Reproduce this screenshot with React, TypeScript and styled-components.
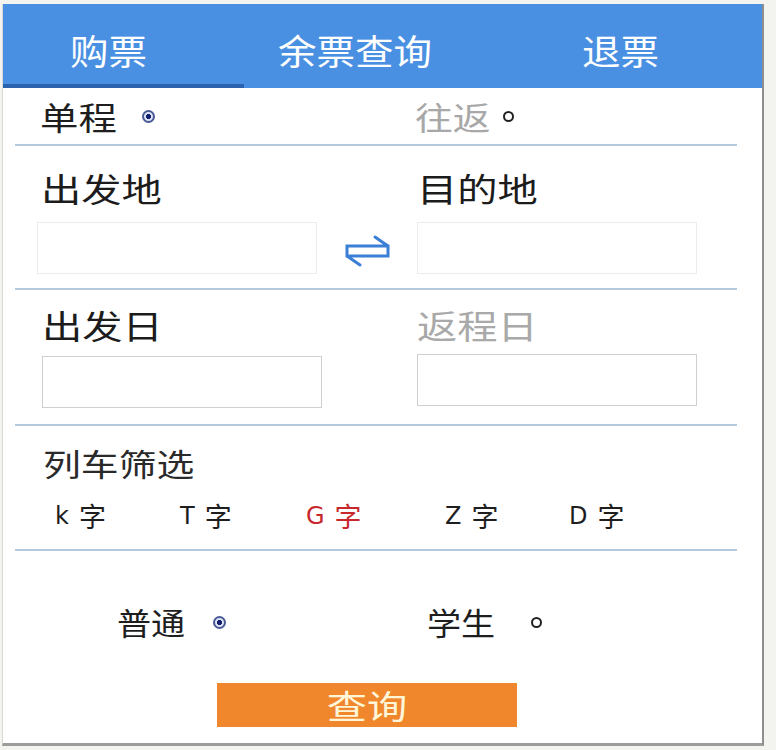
import React from "react";
import styled, { createGlobalStyle } from "styled-components";

const Global = createGlobalStyle`
  html, body { margin: 0; padding: 0; }
  body {
    background: #f3f3ef;
    font-family: "Noto Sans CJK SC", "Noto Sans", sans-serif;
    width: 776px;
    height: 750px;
    overflow: hidden;
  }
`;

const Stretch = styled.span<{ $sx: number; $origin?: string }>`
  display: inline-block;
  white-space: nowrap;
  transform: scaleX(${(p) => p.$sx});
  transform-origin: ${(p) => p.$origin ?? "left"} center;
`;

const Panel = styled.div`
  box-sizing: border-box;
  margin: 4px 0 0 2px;
  width: 762px;
  height: 742px;
  background: #fff;
  border-left: 1px solid #d8d8d8;
  border-right: 2px solid #8e8e8e;
  border-bottom: 3px solid #9c9c9c;
  display: flex;
  flex-direction: column;
`;

const TabBar = styled.div`
  display: flex;
  height: 84px;
  background: #4a90e2;
  flex-shrink: 0;
`;

const Tab = styled.div<{ $w: number; $pad: number; $active?: boolean }>`
  box-sizing: border-box;
  width: ${(p) => p.$w}px;
  padding-left: ${(p) => p.$pad}px;
  padding-top: 10px;
  display: flex;
  align-items: center;
  border-bottom: 4px solid ${(p) => (p.$active ? "#2a62ae" : "transparent")};
  color: #fff;
  font-size: 35px;
`;

const TripRow = styled.div`
  height: 56px;
  display: grid;
  grid-template-columns: 375px 1fr;
  align-items: center;
  padding-left: 37px;
`;

const Choice = styled.div<{ $muted?: boolean; $gap: number; $size?: number }>`
  display: flex;
  align-items: center;
  gap: ${(p) => p.$gap}px;
  font-size: ${(p) => p.$size ?? 32}px;
  line-height: 40px;
  color: ${(p) => (p.$muted ? "#a8a8a8" : "#1e1e1e")};
`;

const Radio = styled.span<{ $on?: boolean }>`
  box-sizing: border-box;
  display: inline-block;
  flex-shrink: 0;
  width: ${(p) => (p.$on ? 13 : 11)}px;
  height: ${(p) => (p.$on ? 13 : 11)}px;
  border-radius: 50%;
  border: 2px solid ${(p) => (p.$on ? "#4a5a96" : "#222")};
  background: ${(p) =>
    p.$on ? "radial-gradient(circle, #14206e 0 38%, #dfe6f5 45%)" : "#fff"};
`;

const Divider = styled.div`
  height: 2px;
  margin: 0 25px 0 12px;
  background: #b3c9dd;
  flex-shrink: 0;
`;

const FieldSection = styled.div<{ $h: number; $left: number; $mid: number }>`
  box-sizing: border-box;
  height: ${(p) => p.$h}px;
  display: grid;
  grid-template-columns: 280px ${(p) => p.$mid}px 280px;
  padding-left: ${(p) => p.$left}px;
`;

const Field = styled.div<{ $top: number }>`
  display: flex;
  flex-direction: column;
  padding-top: ${(p) => p.$top}px;
`;

const Label = styled.div<{ $muted?: boolean; $indent?: number }>`
  font-size: 33px;
  line-height: 40px;
  height: 40px;
  padding-left: ${(p) => p.$indent ?? 0}px;
  color: ${(p) => (p.$muted ? "#a9a9a9" : "#1c1c1c")};
`;

const Box = styled.div<{ $mt: number; $border: string }>`
  box-sizing: border-box;
  margin-top: ${(p) => p.$mt}px;
  height: 52px;
  border: 1px solid ${(p) => p.$border};
  background: #fff;
`;

const SwapCell = styled.div`
  display: flex;
  align-items: flex-end;
  justify-content: flex-start;
  padding: 0 0 21px 27px;
`;

const FilterSection = styled.div`
  height: 123px;
  padding-left: 40px;
  display: flex;
  flex-direction: column;
`;

const FilterTitle = styled.div`
  margin-top: 18px;
  font-size: 31px;
  line-height: 38px;
  color: #2a2a2a;
`;

const FilterRow = styled.div`
  margin-top: 17px;
  display: grid;
  grid-template-columns: 125px 126px 139px 124px auto;
  padding-left: 12px;
`;

const FilterItem = styled.div<{ $red?: boolean }>`
  display: flex;
  align-items: center;
  gap: 10px;
  font-size: 27px;
  line-height: 34px;
  color: ${(p) => (p.$red ? "#c7282c" : "#1e1e1e")};
`;

const Letter = styled.span`
  font-family: "DejaVu Sans", "Noto Sans", sans-serif;
  font-size: 24px;
`;

const PassengerRow = styled.div`
  height: 132px;
  display: grid;
  grid-template-columns: 310px 1fr;
  align-items: center;
  padding: 10px 0 0 114px;
  box-sizing: border-box;
`;

const ButtonRow = styled.div`
  padding-left: 214px;
`;

const QueryButton = styled.button`
  width: 300px;
  height: 44px;
  border: none;
  padding: 0;
  background: #f0872d;
  color: #fff6d8;
  font-family: "Noto Sans CJK SC", sans-serif;
  font-size: 33px;
  line-height: 44px;
`;

const SwapIcon = () => (
  <svg width="48" height="32" viewBox="0 0 48 32" fill="none">
    <path
      d="M3 11 H44 V21 H3 Z M44 11 L31 2 M3 21 L16 30"
      stroke="#3b7fd6"
      strokeWidth="3"
      strokeLinejoin="miter"
      strokeLinecap="round"
    />
  </svg>
);

export default function App() {
  return (
    <>
      <Global />
      <Panel>
        <TabBar>
          <Tab $w={241} $pad={67} $active>
            <Stretch $sx={1.1}>购票</Stretch>
          </Tab>
          <Tab $w={337} $pad={34}>
            <Stretch $sx={1.1}>余票查询</Stretch>
          </Tab>
          <Tab $w={180} $pad={1}>
            <Stretch $sx={1.1}>退票</Stretch>
          </Tab>
        </TabBar>

        <TripRow>
          <Choice $gap={38}>
            <Stretch $sx={1.2}>单程</Stretch>
            <Radio $on />
          </Choice>
          <Choice $muted $gap={24}>
            <Stretch $sx={1.18}>往返</Stretch>
            <Radio />
          </Choice>
        </TripRow>
        <Divider />

        <FieldSection $h={142} $left={34} $mid={100}>
          <Field $top={22}>
            <Label $indent={4}>
              <Stretch $sx={1.22}>出发地</Stretch>
            </Label>
            <Box $mt={14} $border="#ececec" />
          </Field>
          <SwapCell>
            <SwapIcon />
          </SwapCell>
          <Field $top={22}>
            <Label>
              <Stretch $sx={1.22}>目的地</Stretch>
            </Label>
            <Box $mt={14} $border="#ececec" />
          </Field>
        </FieldSection>
        <Divider />

        <FieldSection $h={134} $left={39} $mid={95}>
          <Field $top={15}>
            <Label>
              <Stretch $sx={1.22}>出发日</Stretch>
            </Label>
            <Box $mt={11} $border="#cfcfcf" />
          </Field>
          <div />
          <Field $top={15}>
            <Label $muted>
              <Stretch $sx={1.22}>返程日</Stretch>
            </Label>
            <Box $mt={9} $border="#cfcfcf" />
          </Field>
        </FieldSection>
        <Divider />

        <FilterSection>
          <FilterTitle>
            <Stretch $sx={1.22}>列车筛选</Stretch>
          </FilterTitle>
          <FilterRow>
            <FilterItem>
              <Letter>k</Letter>字
            </FilterItem>
            <FilterItem>
              <Letter>T</Letter>字
            </FilterItem>
            <FilterItem $red>
              <Letter>G</Letter>字
            </FilterItem>
            <FilterItem>
              <Letter>Z</Letter>字
            </FilterItem>
            <FilterItem>
              <Letter>D</Letter>字
            </FilterItem>
          </FilterRow>
        </FilterSection>
        <Divider />

        <PassengerRow>
          <Choice $gap={34} $size={31}>
            <Stretch $sx={1.1}>普通</Stretch>
            <Radio $on />
          </Choice>
          <Choice $gap={42} $size={31}>
            <Stretch $sx={1.1}>学生</Stretch>
            <Radio />
          </Choice>
        </PassengerRow>

        <ButtonRow>
          <QueryButton>
            <Stretch $sx={1.22} $origin="center">
              查询
            </Stretch>
          </QueryButton>
        </ButtonRow>
      </Panel>
    </>
  );
}
